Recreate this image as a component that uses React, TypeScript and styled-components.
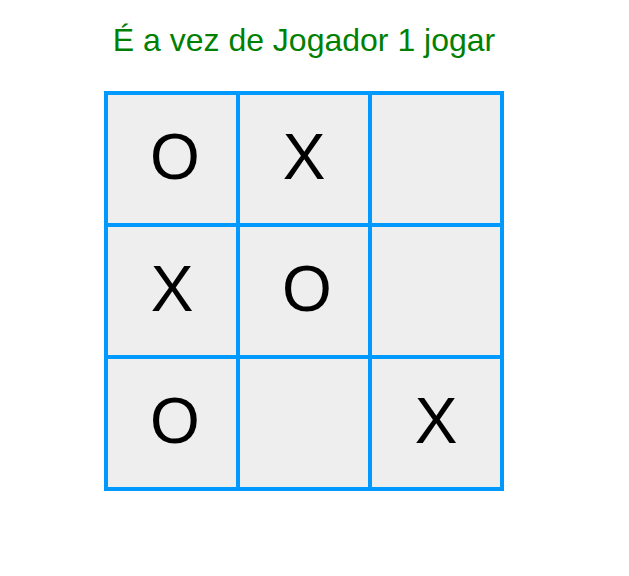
import React from "react";
import styled, { createGlobalStyle } from "styled-components";

const GlobalStyle = createGlobalStyle`
  html, body {
    margin: 0;
    padding: 0;
    background: #ffffff;
  }
  body {
    margin: 8px;
    font-family: "Liberation Sans", Arial, sans-serif;
  }
`;

const Page = styled.main`
  display: flex;
  flex-direction: column;
  align-items: center;
  width: 400px;
  padding-left: 96px;
`;

const Status = styled.h1`
  margin: 14px 0 32px;
  font-size: 32px;
  font-weight: normal;
  line-height: 37px;
  color: #008000;
  text-align: center;
  white-space: nowrap;
`;

const Board = styled.div`
  box-sizing: border-box;
  width: 400px;
  height: 400px;
  padding: 4px;
  display: grid;
  grid-template-columns: repeat(3, 128px);
  grid-template-rows: repeat(3, 128px);
  gap: 4px;
  background: #0099ff;
`;

const Cell = styled.div<{ $mark: string }>`
  display: flex;
  align-items: center;
  justify-content: center;
  background: #eeeeee;
  color: #000000;
  font-size: 64px;
  line-height: 1;
  padding-left: ${(p) => (p.$mark === "O" ? "6px" : "0")};
  padding-bottom: 5px;
`;

const cells = ["O", "X", "", "X", "O", "", "O", "", "X"];

export default function App() {
  return (
    <>
      <GlobalStyle />
      <Page>
        <Status>É a vez de Jogador 1 jogar</Status>
        <Board>
          {cells.map((m, i) => (
            <Cell key={i} $mark={m}>
              {m}
            </Cell>
          ))}
        </Board>
      </Page>
    </>
  );
}
